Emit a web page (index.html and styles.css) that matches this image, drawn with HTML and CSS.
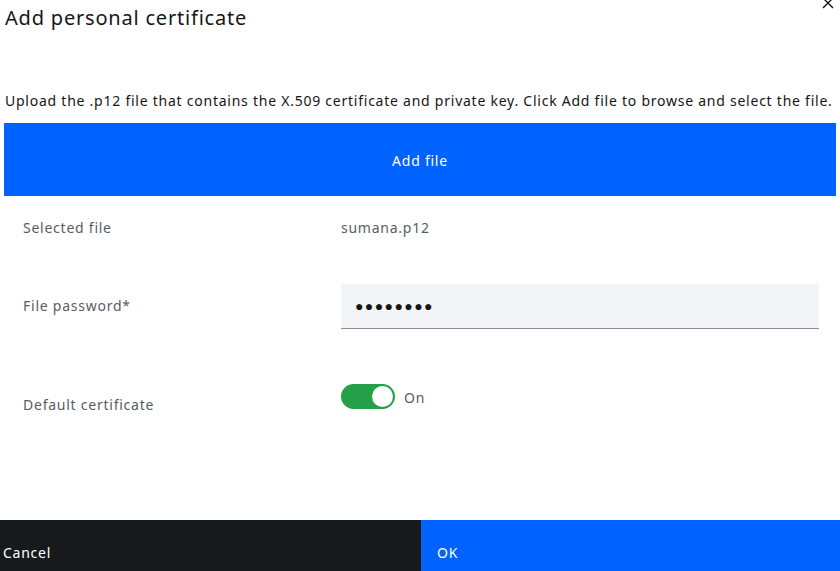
FILE: index.html
```html
<!DOCTYPE html>
<html>
	<head>
		<meta charset="utf-8">
		<title>Add personal certificate</title>
		<link rel="stylesheet" href="styles.css">
	</head>
	<body>
		<div class="modal">
			<div class="head">
				<h2 class="title">Add personal certificate</h2>
				<button class="close" aria-label="Close">
					<svg width="14" height="14" viewBox="0 0 14 14"><path d="M2 2L12 12M12 2L2 12" stroke="#161616" stroke-width="1.4" fill="none"/></svg>
				</button>
			</div>
			<p class="desc">Upload the .p12 file that contains the X.509 certificate and private key. Click Add file to browse and select the file.</p>
			<button class="addfile">Add file</button>
			<div class="form">
				<div class="row row-file">
					<span class="label">Selected file</span>
					<span class="value">sumana.p12</span>
				</div>
				<div class="row row-pass">
					<span class="label">File password*</span>
					<div class="input">&#9679;&#9679;&#9679;&#9679;&#9679;&#9679;&#9679;&#9679;</div>
				</div>
				<div class="row row-toggle">
					<span class="label">Default certificate</span>
					<div class="toggle">
						<span class="track"><span class="knob"></span></span>
						<span class="state">On</span>
					</div>
				</div>
			</div>
			<div class="foot">
				<button class="btn cancel">Cancel</button>
				<button class="btn ok">OK</button>
			</div>
		</div>
	</body>
</html>
```

FILE: styles.css
```css
*{margin:0;padding:0;box-sizing:border-box;}
body{width:840px;height:571px;overflow:hidden;background:#fff;font:14px/1.3 "Noto Sans","Liberation Sans",sans-serif;letter-spacing:0.054em;color:#161616;}
button{font:inherit;letter-spacing:inherit;border:0;cursor:pointer;}
.modal{height:571px;display:flex;flex-direction:column;position:relative;}
.head{padding:5px 5px 0;height:40px;}
.title{font-size:20px;font-weight:400;line-height:26px;letter-spacing:0.04em;color:#161616;}
.close{position:absolute;top:-5px;right:4px;width:16px;height:16px;background:none;display:flex;align-items:center;justify-content:center;}
.desc{margin-top:51px;padding-left:5px;font-size:14px;line-height:20px;color:#161616;white-space:nowrap;}
.addfile{margin:12px 4px 0;height:73px;padding-top:3px;background:#0062ff;color:#fff;font-size:14px;}
.form{padding-left:23px;}
.row{display:grid;grid-template-columns:318px 478px;align-items:center;color:#565e65;}
.row-file{height:60px;margin-top:2px;}
.value{color:#565e65;}
.row-pass{margin-top:26px;}
.input{height:45px;background:#f2f4f8;border-bottom:1px solid #8d8d8d;padding:0 14px;display:flex;align-items:center;font-size:14px;letter-spacing:1.4px;color:#161616;}
.row-toggle{margin-top:55px;align-items:start;}
.row-toggle .label{padding-top:12px;}
.toggle{display:flex;align-items:center;gap:9px;}
.track{width:54px;height:25px;border-radius:13px;background:#24a148;position:relative;}
.knob{position:absolute;right:2px;top:2px;width:21px;height:21px;border-radius:50%;background:#fff;}
.state{color:#565e65;padding-top:3px;}
.foot{margin-top:auto;display:flex;height:51px;}
.btn{height:51px;padding:15px 0 0;text-align:left;color:#fff;font-size:14px;}
.cancel{width:421px;background:#161a1d;padding-left:3px;}
.ok{flex:1;background:#0062ff;padding-left:16px;}
```
